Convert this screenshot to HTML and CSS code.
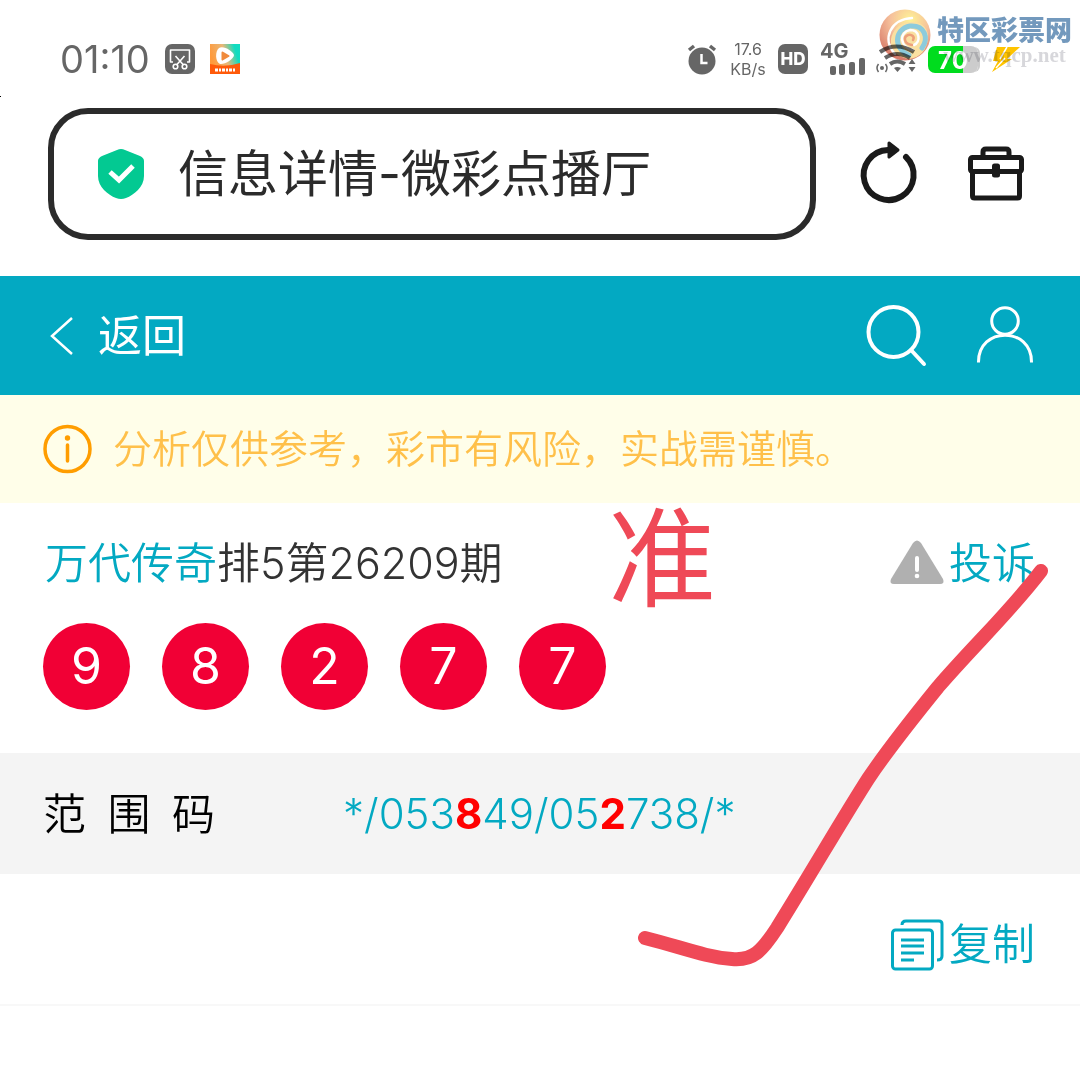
FILE: index.html
```html
<!DOCTYPE html>
<html lang="zh-CN">
<head>
<meta charset="utf-8">
<meta name="viewport" content="width=device-width, initial-scale=1">
<title>信息详情-微彩点播厅</title>
<link rel="stylesheet" href="styles.css">
</head>
<body>

<!-- Status bar -->
<div class="status-bar">
    <div class="status-left">
        <span class="clock">01:10</span>
        <svg width="30" height="30" viewBox="0 0 30 30">
            <rect width="30" height="30" rx="7" fill="#666"/>
            <g fill="none" stroke="#fff" stroke-width="1.6">
                <path d="M8 18H5.500V6h19v12H22" stroke-linejoin="round"/>
                <path d="M10.500 12l8 9M19.500 12l-8 9"/>
                <circle cx="10.500" cy="22.500" r="2.300"/>
                <circle cx="19.500" cy="22.500" r="2.300"/>
            </g>
        </svg>
        <svg width="30" height="30" viewBox="0 0 30 30">
            <defs>
                <linearGradient id="appBg" x1="0" y1="0.300" x2="1" y2="0">
                    <stop offset="0" stop-color="#ff9a3c"/>
                    <stop offset="0.450" stop-color="#e8b878"/>
                    <stop offset="0.800" stop-color="#10dcc0"/>
                </linearGradient>
            </defs>
            <rect width="30" height="30" fill="url(#appBg)"/>
            <path d="M0 20q15 4 30-1v11H0z" fill="#ff5a0a"/>
            <path d="M9 4c4-3 14 3 15 7 0 4-10 10-14 9-5-2-5-13-1-16z" fill="#fff"/>
            <path d="M12.500 8.500l6 3.500-6 3.500z" fill="#f08a3c" stroke="#f08a3c" stroke-width="2" stroke-linejoin="round"/>
            <path d="M5 26h20" stroke="#fff" stroke-width="3" stroke-dasharray="3 1 2 1"/>
        </svg>
    </div>
    <div class="status-right">
        <svg width="30" height="30" viewBox="0 0 30 30">
            <circle cx="14" cy="17" r="13.500" fill="#666"/>
            <path d="M1 6l5-4M27 6l-5-4" stroke="#666" stroke-width="3.500"/>
            <path d="M13.500 10v9h6" fill="none" stroke="#fff" stroke-width="2.500"/>
        </svg>
        <div class="net-speed"><span>17.6</span><span>KB/s</span></div>
        <div class="hd">HD</div>
        <div class="signal">
            <span class="signal-type">4G</span>
            <svg width="34" height="17" viewBox="0 0 34 17" fill="#666">
                <rect x="0" y="8" width="6" height="9" rx="2"/>
                <rect x="9" y="6" width="6" height="11" rx="2"/>
                <rect x="19" y="4" width="6" height="13" rx="2"/>
                <rect x="29" y="0" width="6" height="17" rx="2"/>
            </svg>
        </div>
        <svg width="40" height="30" viewBox="0 0 40 30">
            <g fill="none" stroke="#666" stroke-width="4">
                <path d="M4 8q16-11 34 0"/>
                <path d="M9 14q12-8 25 0"/>
                <path d="M14 20q7-5 15 0"/>
            </g>
            <path d="M18 24q3-2 7 0l-3.500 4z" fill="#666"/>
            <circle cx="6" cy="24" r="2" fill="#666"/>
            <path d="M2.500 20q-3 4 0 8M9.500 20q3 4 0 8" fill="none" stroke="#666" stroke-width="1.500"/>
            <path d="M36 15l3.500 5h-7zM36 28l3.500-5h-7z" fill="#666"/>
        </svg>
        <div class="battery">70</div>
        <svg width="27" height="27" viewBox="0 0 27 27">
            <path d="M4 1h23L14 13h5L-1 26l6-11H0z" fill="#ffc400"/>
            <path d="M14 1L7 13M12 12L3 22" stroke="#fff" stroke-width="1.500"/>
        </svg>
    </div>
</div>

<!-- Site watermark over the status bar -->
<div class="watermark">
    <svg width="52" height="52" viewBox="0 0 52 52">
        <defs>
            <radialGradient id="ball" cx="0.600" cy="0.200" r="0.850">
                <stop offset="0" stop-color="#fff07a"/>
                <stop offset="0.450" stop-color="#f4b183"/>
                <stop offset="1" stop-color="#c9503e"/>
            </radialGradient>
        </defs>
        <circle cx="26" cy="26" r="25.500" fill="url(#ball)"/>
        <path d="M30 50C5 46 8 20 26 14c15-4 24 5 23 15-1 12-8 20-19 21z" fill="#f9d98a"/>
        <g fill="none" stroke-linecap="round">
            <path d="M16 45C2 30 12 10 33 9" stroke="#fff" stroke-width="2.500"/>
            <path d="M30 46C14 40 15 20 31 17c15-1 19 12 12 22" stroke="#70bed4" stroke-width="5"/>
            <path d="M34 41C20 38 20 23 31 21c10 0 11 12 4 15" stroke="#fff" stroke-width="2.500"/>
            <path d="M33 36c-8-1-9-8-4-10 4-1 7 2 5 5" stroke="#e9895a" stroke-width="2.500"/>
        </g>
    </svg>
    <div class="watermark-text">
        <span class="watermark-name">特区彩票网</span>
        <span class="watermark-url">www.tqcp.net</span>
    </div>
</div>

<!-- Browser address bar -->
<div class="browser-bar">
    <button type="button" class="address">
        <svg width="46" height="50" viewBox="0 0 46 50">
            <path d="M19 1q4-2 8 0l15 6q4 2 4 5v15c0 11-10 19-18 22q-5 2-10 0C10 46 0 38 0 27V12q0-3 4-5z" fill="#03c992"/>
            <path d="M12 23l9 8 14-14" fill="none" stroke="#fff" stroke-width="5"/>
        </svg>
        <span>信息详情-微彩点播厅</span>
    </button>
    <div class="browser-icons">
        <button type="button" aria-label="刷新">
            <svg width="60" height="64" viewBox="0 0 60 64">
                <path d="M48 17A25 25 0 1 1 30 10" fill="none" stroke="#1a1a1a" stroke-width="6" stroke-linecap="round"/>
                <path d="M31 3l9 7-9 7z" fill="#1a1a1a" stroke="#1a1a1a" stroke-width="3" stroke-linejoin="round"/>
            </svg>
        </button>
        <button type="button" aria-label="工具箱">
            <svg width="60" height="64" viewBox="0 0 60 64" fill="none" stroke="#1a1a1a" stroke-width="5" stroke-linejoin="round">
                <path d="M17 16v-4q0-3 3-3h20q3 0 3 3v4"/>
                <rect x="4.500" y="17.500" width="51" height="14" rx="2"/>
                <path d="M6.500 31v25q0 2 2 2h43q2 0 2-2V31"/>
                <rect x="28.500" y="26" width="3" height="9"/>
            </svg>
        </button>
    </div>
</div>

<!-- Page header -->
<header class="header">
    <a href="#" class="back">
        <svg width="24" height="40" viewBox="0 0 24 40">
            <path d="M22 2L2 20l20 18" fill="none" stroke="#fff" stroke-width="2.500"/>
        </svg>
        <span>返回</span>
    </a>
    <div class="header-icons">
        <a href="#" aria-label="搜索">
            <svg width="62" height="62" viewBox="0 0 62 62" fill="none" stroke="#fff" stroke-width="4" stroke-linecap="round">
                <circle cx="27.500" cy="27" r="25"/>
                <path d="M45 45l13 14"/>
            </svg>
        </a>
        <a href="#" aria-label="我的">
            <svg width="58" height="62" viewBox="0 0 58 62" fill="none" stroke="#fff" stroke-width="3">
                <circle cx="29" cy="16" r="13.300"/>
                <path d="M2.500 57.500C2 21 56 21 55.500 57.500"/>
            </svg>
        </a>
    </div>
</header>

<div class="notice">
    <svg width="50" height="50" viewBox="0 0 50 50">
        <circle cx="25.500" cy="25" r="22.500" fill="none" stroke="#ff9d00" stroke-width="3.500"/>
        <circle cx="25.500" cy="14" r="2.700" fill="#ff9d00"/>
        <path d="M25.500 21v16" stroke="#ff9d00" stroke-width="3.500" stroke-linecap="round"/>
    </svg>
    <span>分析仅供参考，彩市有风险，实战需谨慎。</span>
</div>

<main class="content">
    <section class="issue">
        <div class="issue-head">
            <h1><a href="#">万代传奇</a>排5第26209期</h1>
            <a href="#" class="action">
                <svg width="54" height="46" viewBox="0 0 54 46">
                    <path d="M23 3q4-5 8 0l22 36q2 5-3 5H4q-5 0-3-5z" fill="#b0b0b0"/>
                    <path d="M27 18v12" stroke="#fff" stroke-width="4" stroke-linecap="round"/>
                    <circle cx="27" cy="36" r="2.300" fill="#fff"/>
                </svg>
                <span>投诉</span>
            </a>
        </div>
        <div class="balls">
            <span>9</span>
            <span>8</span>
            <span>2</span>
            <span>7</span>
            <span>7</span>
        </div>
    </section>

    <section class="range">
        <span class="range-label">范&ensp;围&ensp;码</span>
        <span class="range-code">*/053<b>8</b>49/05<b>2</b>738/*</span>
    </section>

    <div class="copy-row">
        <button type="button" class="action">
            <svg width="54" height="52" viewBox="0 0 54 52" fill="none" stroke="#03a9c2" stroke-width="3">
                <rect x="2.500" y="12" width="40" height="39" rx="3"/>
                <path d="M12 7q0-4 4-4h33q3 0 3 3v32q0 4-5 4"/>
                <path d="M11 22h23M11 28h23M11 35h23M11 42h13"/>
            </svg>
            <span>复制</span>
        </button>
    </div>

    <!-- Hand-drawn marks on top of the result -->
    <span class="mark-text">准</span>
    <svg class="mark-tick" width="412" height="406" viewBox="0 0 412 406">
        <path d="M403 11C370 54 338 83 300 127C270 164 250 189 230 219C205 258 175 310 139 368C124 391 115 401 94 399C67 397 43 387 7 378" fill="none" stroke="#ef4957" stroke-width="14" stroke-linecap="round"/>
    </svg>
</main>

</body>
</html>
```
FILE: styles.css
```css
* {
    box-sizing: border-box;
    margin: 0;
    padding: 0;
}

body {
    font-family: Inter, "Noto Sans CJK SC", sans-serif;
    font-size: 43px;
    line-height: 60px;
    color: #333;
    background: #fff;
    position: relative;
}

svg {
    display: block;
    flex: none;
    overflow: visible;
}

a {
    color: #03a9c2;
    text-decoration: none;
}

button {
    font: inherit;
    color: inherit;
    background: none;
    border: none;
    cursor: pointer;
}

/* Status bar */
.status-bar {
    display: flex;
    justify-content: space-between;
    align-items: center;
    height: 108px;
    padding: 10px 60px 0;
    color: #666;
}

.status-bar::before {
    content: "";
    position: absolute;
    left: 0;
    top: 96px;
    width: 1px;
    height: 1px;
    background: #000;
}

.status-left,
.status-right {
    display: flex;
    align-items: center;
}

.status-left {
    gap: 15px;
}

.status-right {
    gap: 12px;
}

.clock {
    font-size: 38px;
}

.net-speed {
    display: flex;
    flex-direction: column;
    align-items: center;
    width: 36px;
    font-size: 16px;
    line-height: 20px;
}

.hd {
    width: 30px;
    height: 30px;
    border-radius: 7px;
    background: #666;
    color: #fff;
    font-size: 17px;
    font-weight: 800;
    line-height: 30px;
    text-align: center;
}

.signal {
    display: flex;
    flex-direction: column;
    width: 44px;
    height: 30px;
}

.signal-type {
    font-size: 20px;
    font-weight: 700;
    line-height: 14px;
}

.signal svg {
    align-self: flex-end;
}

.battery {
    width: 50px;
    height: 27px;
    margin-right: 3px;
    border-radius: 7px;
    background: linear-gradient(to right, #00dc1e 70%, #ccc 70%);
    box-shadow: 3px 0 0 -1px #ccc;
    color: #fff;
    font-size: 24px;
    font-weight: 700;
    line-height: 29px;
    text-align: center;
}

/* Watermark */
.watermark {
    position: absolute;
    top: 9px;
    right: 8px;
    display: flex;
    gap: 6px;
    mix-blend-mode: multiply;
}

.watermark svg {
    opacity: 0.8;
}

.watermark-text {
    display: flex;
    flex-direction: column;
    align-items: center;
}

.watermark-name {
    color: #7399bd;
    font-size: 27px;
    font-weight: 900;
    line-height: 44px;
}

.watermark-url {
    color: rgba(205, 205, 210, 0.8);
    font-family: "Liberation Serif", serif;
    font-size: 21px;
    font-weight: 700;
    line-height: 4px;
}

/* Browser bar */
.browser-bar {
    display: flex;
    align-items: center;
    gap: 42px;
    padding: 0 54px 36px 48px;
}

.address {
    flex: 1;
    display: flex;
    align-items: center;
    gap: 34px;
    height: 132px;
    padding: 0 44px;
    border: 6px solid #2b2b2b;
    border-radius: 40px;
    font-size: 50px;
    color: #2b2b2b;
}

.browser-icons {
    display: flex;
    gap: 48px;
    padding-bottom: 4px;
}

/* Header */
.header {
    display: flex;
    justify-content: space-between;
    align-items: center;
    height: 119px;
    padding: 0 46px 0 50px;
    background: #03a9c2;
}

.back {
    display: flex;
    align-items: center;
    gap: 24px;
    color: #fff;
    font-size: 44px;
}

.header-icons {
    display: flex;
    gap: 48px;
}

.notice {
    display: flex;
    align-items: center;
    gap: 21px;
    height: 108px;
    padding: 0 42px;
    background: #fffee9;
    color: #ffc04a;
    font-size: 39px;
    font-weight: 350;
}

/* Result */
.content {
    position: relative;
    font-weight: 350;
}

.issue {
    padding: 30px 45px 43px 43px;
}

.issue-head {
    display: flex;
    justify-content: space-between;
    align-items: center;
    margin-bottom: 30px;
    padding-left: 2px;
}

.issue-head h1 {
    font-size: 43px;
    font-weight: 350;
}

.action {
    display: flex;
    align-items: center;
    gap: 5px;
    color: #03a9c2;
}

.balls {
    display: flex;
    gap: 32px;
}

.balls span {
    width: 87px;
    height: 87px;
    border-radius: 50%;
    background: #f10035;
    color: #fff;
    font-size: 50px;
    font-weight: 400;
    line-height: 87px;
    text-align: center;
}

.range {
    display: flex;
    align-items: center;
    height: 121px;
    padding: 0 43px;
    background: #f4f4f4;
}

.range-label {
    width: 300px;
    color: #000;
}

.range-code {
    color: #03a9c2;
    font-size: 42px;
}

.range-code b {
    color: #f00;
    font-weight: 700;
}

.copy-row {
    display: flex;
    justify-content: flex-end;
    align-items: center;
    height: 132px;
    padding: 10px 45px 0;
    border-bottom: 2px solid #f8f8f8;
}

/* Marks */
.mark-text {
    position: absolute;
    left: 608px;
    top: 2px;
    color: #ef4957;
    font-size: 108px;
    font-weight: 400;
    line-height: 108px;
}

.mark-tick {
    position: absolute;
    right: 30px;
    top: 57px;
    pointer-events: none;
}
```
